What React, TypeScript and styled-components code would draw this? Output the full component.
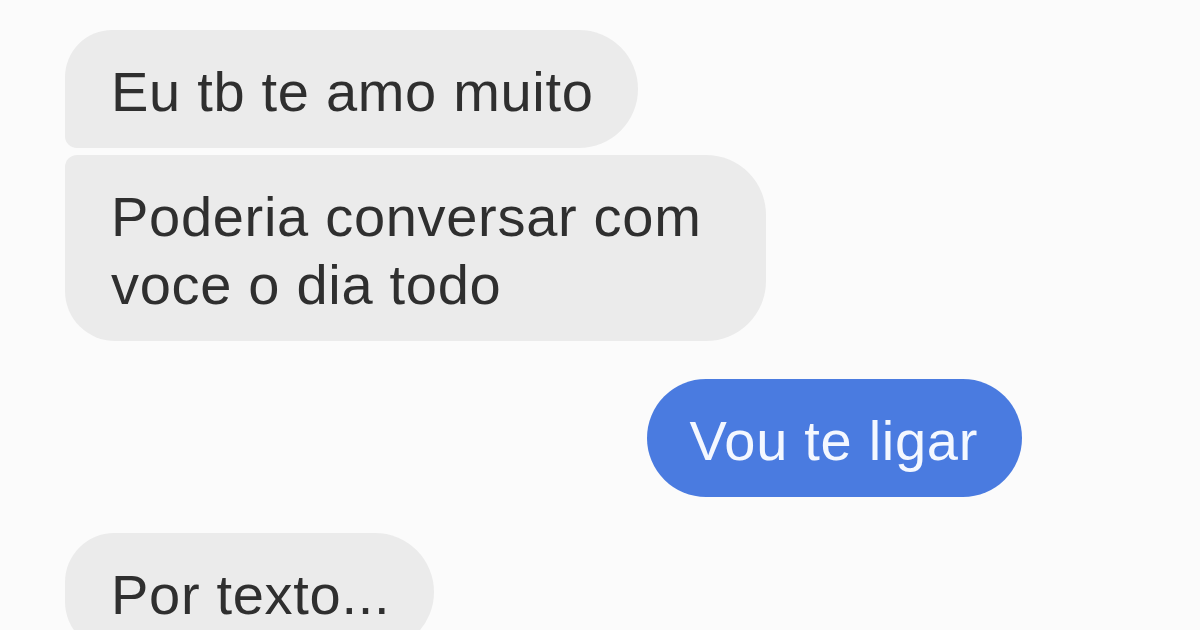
import React from "react";
import styled, { createGlobalStyle } from "styled-components";

const Global = createGlobalStyle`
  html, body { margin: 0; padding: 0; background: #fbfbfb; }
  body { width: 1200px; height: 630px; overflow: hidden; font-family: "Liberation Sans", Arial, sans-serif; }
`;

const Thread = styled.div`
  display: flex;
  flex-direction: column;
  padding: 30px 178px 0 65px;
  height: 630px;
  box-sizing: border-box;
  overflow: hidden;
`;

const Row = styled.div<{ $mine?: boolean; $gap: number }>`
  display: flex;
  justify-content: ${(p) => (p.$mine ? "flex-end" : "flex-start")};
  margin-top: ${(p) => p.$gap}px;
`;

type Pos = "first" | "last" | "single";

const Bubble = styled.div<{ $mine?: boolean; $pos: Pos; $padRight?: number }>`
  box-sizing: border-box;
  padding: 28px ${(p) => p.$padRight ?? 44}px 22px ${(p) => (p.$mine ? 42 : 46)}px;
  font-size: 56px;
  line-height: 68px;
  letter-spacing: 0.7px;
  color: ${(p) => (p.$mine ? "#f4f8ff" : "#2f2f2f")};
  background: ${(p) => (p.$mine ? "#4a7be0" : "#ebebeb")};
  border-radius: ${(p) =>
    p.$mine
      ? "60px"
      : p.$pos === "first"
      ? "48px 60px 60px 12px"
      : p.$pos === "last"
      ? "12px 60px 60px 50px"
      : "50px 60px 60px 50px"};
  white-space: pre-line;
`;

export default function App() {
  return (
    <>
      <Global />
      <Thread>
        <Row $gap={0}>
          <Bubble $pos="first">Eu tb te amo muito</Bubble>
        </Row>
        <Row $gap={7}>
          <Bubble $pos="last" $padRight={64}>
            {"Poderia conversar com\nvoce o dia todo"}
          </Bubble>
        </Row>
        <Row $mine $gap={38}>
          <Bubble $mine $pos="single">Vou te ligar</Bubble>
        </Row>
        <Row $gap={36}>
          <Bubble $pos="single">Por texto...</Bubble>
        </Row>
      </Thread>
    </>
  );
}
